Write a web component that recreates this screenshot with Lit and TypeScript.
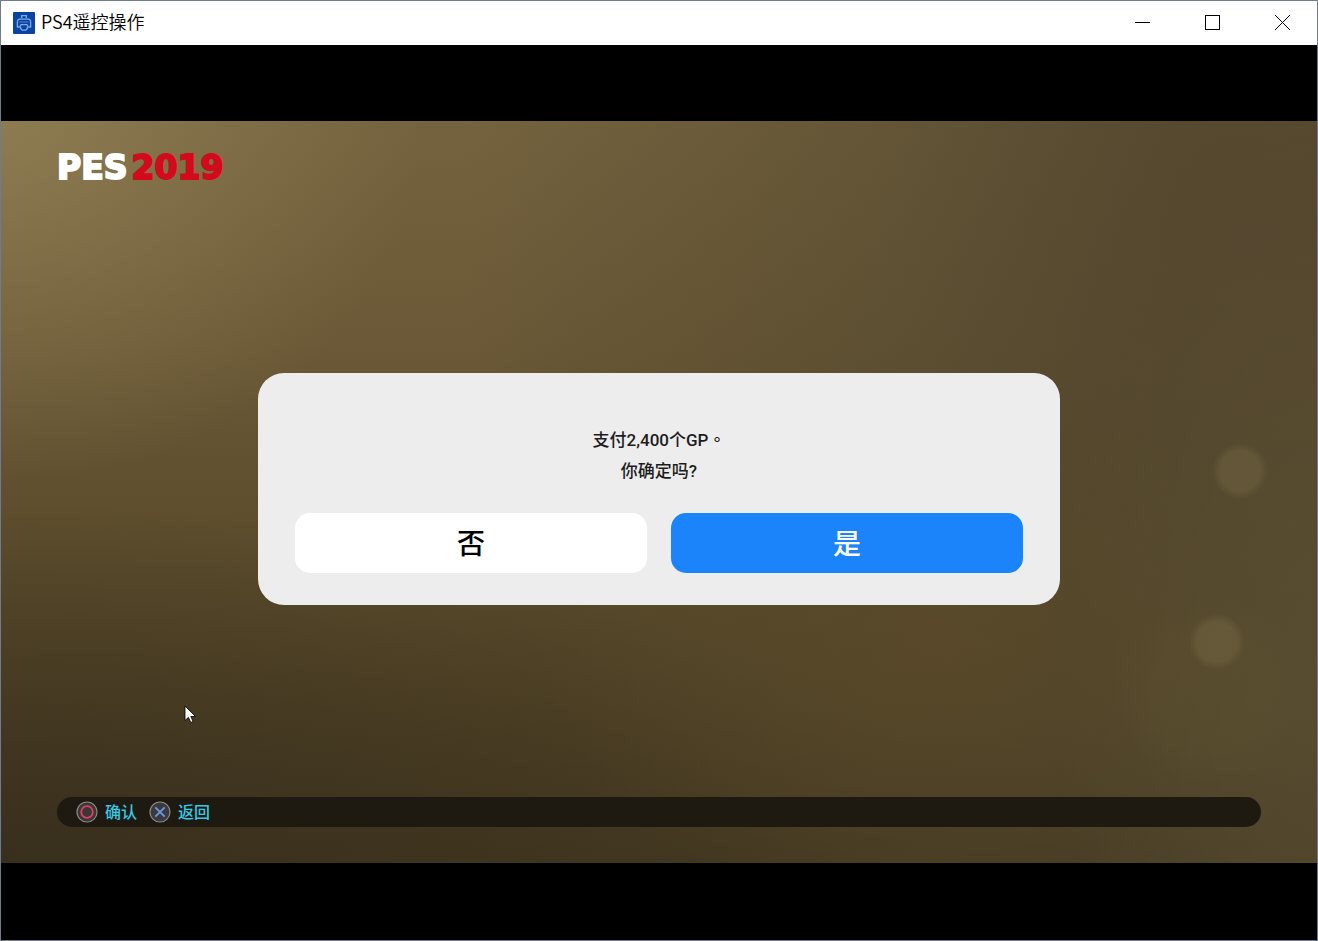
import { LitElement, html, css } from "lit";
import { customElement } from "lit/decorators.js";

@customElement("app-root")
export class AppRoot extends LitElement {
  static styles = css`
    :host {
      display: block;
      font-family: Roboto, "Noto Sans CJK SC", sans-serif;
    }
    * {
      box-sizing: border-box;
    }
    .window {
      min-height: 100vh;
      display: flex;
      flex-direction: column;
      border: 1px solid #6f7b90;
      background: #000;
    }
    .titlebar {
      display: flex;
      align-items: center;
      height: 44px;
      padding-left: 12px;
      background: #fff;
      color: #000;
    }
    .title {
      flex: 1;
      margin: 0 0 0 6px;
      padding-bottom: 4px;
      font: 350 18px/24px "Noto Sans CJK SC", sans-serif;
    }
    .app-icon,
    .caption svg,
    .key {
      display: block;
    }
    .caption {
      width: 70px;
      height: 44px;
      padding: 0 0 2px;
      border: 0;
      background: none;
      display: grid;
      place-items: center;
    }
    .screen {
      flex: 1;
      padding: 76px 0;
    }
    .stage {
      position: relative;
      width: 100%;
      aspect-ratio: 1316 / 742;
      display: flex;
      flex-direction: column;
      justify-content: space-between;
      align-items: center;
      padding: 29px 56px 36px;
      overflow: hidden;
      background:
        radial-gradient(circle at 1239px 350px, #6e624090 0 20px, transparent 28px),
        radial-gradient(circle at 1216px 521px, #6e624090 0 20px, transparent 28px),
        radial-gradient(circle at 1210px 570px, #64573430 0 60px, transparent 96px),
        radial-gradient(ellipse 260px 560px at 100% 75%, #5c5033b0, transparent),
        radial-gradient(ellipse 420px 360px at 0 0, #9b895ca0, transparent),
        radial-gradient(ellipse 420px 260px at 72% 72%, #624e2a80, transparent),
        radial-gradient(ellipse 900px 360px at 0 100%, #332b1cb0, transparent),
        radial-gradient(ellipse 420px 420px at 100% 15%, #52432e80, transparent),
        linear-gradient(90deg, transparent 35%, #4a412ab0 90%),
        linear-gradient(180deg, #75633f 0%, #6b5937 30%, #5a4b2b 60%, #43371e 100%);
    }
    .logo {
      align-self: flex-start;
      margin: 0;
      font: 700 33px/36px "DejaVu Sans", sans-serif;
      color: #fff;
      -webkit-text-stroke: 2px currentColor;
    }
    .year {
      margin-left: 4px;
      color: #d20a1b;
    }
    .dialog {
      width: 66.6%;
      margin-bottom: 5px;
      padding: 52px 37px 32px;
      border-radius: 26px;
      background: #ededed;
      text-align: center;
    }
    .message {
      margin: 0 0 26px;
      font: 500 17px/31px Roboto, "Noto Sans CJK TC", sans-serif;
      color: #1c1c1c;
    }
    .choices {
      display: grid;
      grid-template-columns: 1fr 1fr;
      gap: 24px;
    }
    .choice {
      height: 60px;
      padding: 0 0 2px;
      border: 0;
      border-radius: 15px;
      background: #fff;
      color: #000;
      font: 500 28px/40px "Noto Sans CJK SC", sans-serif;
    }
    .primary {
      background: #1b84fb;
      color: #fff;
    }
    .hints {
      align-self: stretch;
      display: flex;
      align-items: center;
      gap: 12px;
      height: 30px;
      padding: 0 19px;
      border-radius: 15px;
      background: #1e1a12;
    }
    .hint {
      display: flex;
      align-items: center;
      gap: 7px;
      padding: 0;
      border: 0;
      background: none;
      color: #35c9e6;
      font: 500 16px/24px "Noto Sans CJK SC", sans-serif;
    }
    .hint span {
      padding-bottom: 2px;
    }
    .cursor {
      position: absolute;
      left: 183px;
      top: 584px;
    }
  `;

  render() {
    return html`
      <div class="window">
        <header class="titlebar">
          <svg class="app-icon" width="22" height="22" viewBox="0 0 22 22" aria-hidden="true">
            <rect width="22" height="22" rx="1" fill="#0a44a0" />
            <g fill="none" stroke="#7fa8e8" stroke-width="1.3">
              <path d="M8.6 6.2V3.6h4.8v2.6" />
              <path d="M6.8 15H4.400V9.800c0-1.400.9-2.400 2.200-2.600h8.800c1.300.2 2.200 1.200 2.200 2.600V15h-2.400" />
              <path d="M6.8 15l1.200-2.400h6l1.200 2.400" />
              <path d="M7.600 15v1.400l1.600 1.800h3.600l1.600-1.800V15" />
              <path d="M6.400 10h9.200" stroke-opacity=".5" />
            </g>
          </svg>
          <h1 class="title">PS4遥控操作</h1>
          <button class="caption" aria-label="最小化">
            <svg width="15" height="15"><path d="M0 7.5h15" stroke="#000" /></svg>
          </button>
          <button class="caption" aria-label="最大化">
            <svg width="15" height="15"><rect x=".5" y=".5" width="14" height="14" fill="none" stroke="#000" /></svg>
          </button>
          <button class="caption" aria-label="关闭">
            <svg width="15" height="15"><path d="M0 0l15 15M15 0L0 15" stroke="#000" /></svg>
          </button>
        </header>
        <div class="screen">
          <main class="stage">
            <p class="logo">PES<span class="year">2019</span></p>
            <section class="dialog" role="dialog" aria-labelledby="message">
              <p class="message" id="message">支付2,400个GP。<br />你确定吗?</p>
              <div class="choices">
                <button class="choice">否</button>
                <button class="choice primary">是</button>
              </div>
            </section>
            <footer class="hints">
              <button class="hint">
                <svg class="key" width="22" height="22" viewBox="0 0 22 22" aria-hidden="true">
                  <circle cx="11" cy="11" r="10" fill="#3a3836" stroke="#8b8985" stroke-width="1.2" />
                  <circle cx="11" cy="11" r="5.8" fill="none" stroke="#e0405f" stroke-width="1.8" />
                </svg>
                <span>确认</span>
              </button>
              <button class="hint">
                <svg class="key" width="22" height="22" viewBox="0 0 22 22" aria-hidden="true">
                  <circle cx="11" cy="11" r="10" fill="#3a3a3e" stroke="#8b8985" stroke-width="1.2" />
                  <path d="M6.3 6.3l9.4 9.4M15.7 6.3l-9.4 9.4" stroke="#6a9ae0" stroke-width="1.8" />
                </svg>
                <span>返回</span>
              </button>
            </footer>
            <svg class="cursor" width="14" height="20" viewBox="0 0 14 20" aria-hidden="true">
              <path d="M1 1v14.5l3.4-3.2 2.4 5.2 2.3-1-2.300-5h4.700z" fill="#fff" stroke="#000" stroke-width=".8" />
            </svg>
          </main>
        </div>
      </div>
    `;
  }
}
